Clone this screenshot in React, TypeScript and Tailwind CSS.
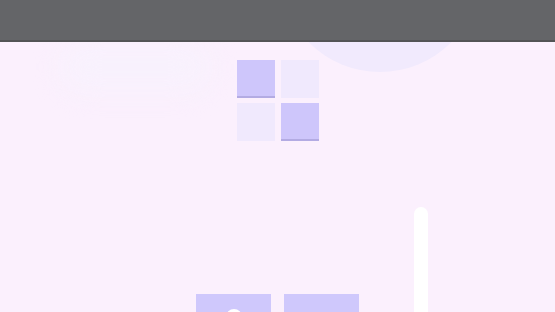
import React from "react";

export default function App() {
  return (
    <div className="relative w-[555px] h-[312px] overflow-hidden bg-[#fbf0fd] font-['Liberation_Sans',sans-serif]">
      <div className="absolute left-[280px] top-[-128px] w-[200px] h-[200px] rounded-full bg-[#f1eafd]" />
      <div className="absolute left-[60px] top-[42px] w-[150px] h-[50px] rounded-full bg-[#f8f1fd] blur-md" />
      <header className="relative h-[42px] bg-[#646568] border-b-2 border-[#535456]" />
      <main className="relative flex flex-col items-center pt-[18px]">
        <div className="grid grid-cols-[38px_38px] gap-x-[6px] gap-y-[5px]">
          <div className="h-[38px] bg-[#cec6fb] border-b-2 border-[#b3abe3]" />
          <div className="h-[38px] bg-[#f0e9fd]" />
          <div className="h-[38px] bg-[#f0e9fd]" />
          <div className="h-[38px] bg-[#cec6fb] border-b-2 border-[#b3abe3]" />
        </div>
        <div className="mt-[153px] flex gap-[13px]">
          <div className="relative w-[75px] h-[40px] bg-[#cfc8fc] flex justify-center">
            <div className="mt-[15px] w-[16px] h-[16px] rounded-full bg-white" />
          </div>
          <div className="w-[75px] h-[40px] bg-[#cfc8fc]" />
        </div>
      </main>
      <div className="absolute left-[414px] top-[207px] w-[14px] h-[110px] rounded-t-full bg-white flex flex-col justify-end">
        <div className="h-[4px] bg-[#cfc8fc]" />
      </div>
    </div>
  );
}
